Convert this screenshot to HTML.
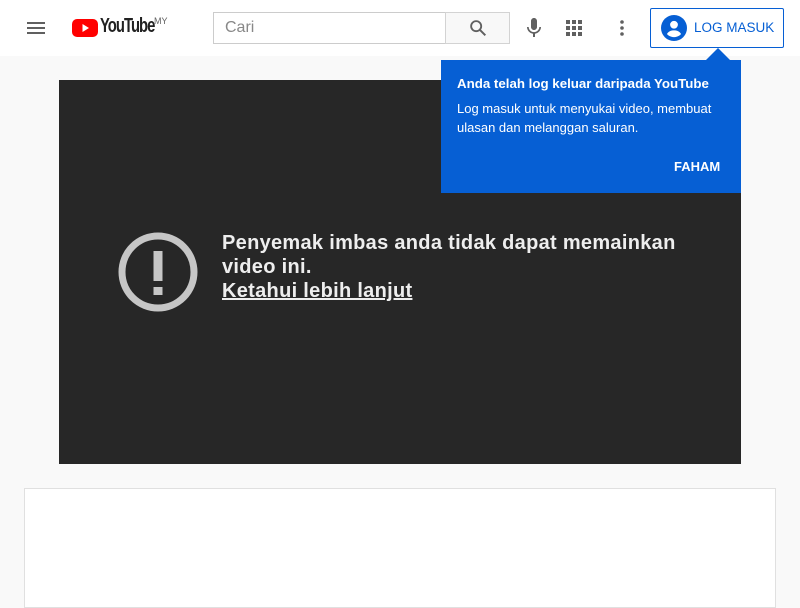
<!DOCTYPE html>
<html><head><meta charset="utf-8"><style>
*{margin:0;padding:0;box-sizing:border-box}
body{width:800px;height:600px;overflow:hidden;background:#f9f9f9;font-family:"Liberation Sans",Roboto,sans-serif;position:relative}
.hdr{position:absolute;left:0;top:0;width:800px;height:56px;background:#fff}
.abs{position:absolute}
</style></head><body>
<div class="hdr">
  <svg class="abs" style="left:24px;top:16px" width="24" height="24" viewBox="0 0 24 24"><path d="M3 6h18v2H3zM3 11h18v2H3zM3 16h18v2H3z" fill="#606060"/></svg>
  <svg class="abs" style="left:72px;top:19px" width="26" height="18" viewBox="0 0 26 18"><rect x="0" y="0" width="26" height="18" rx="5" fill="#f00"/><path d="M10.5 5v8l6.5-4z" fill="#fff"/></svg>
  <div class="abs" style="left:100px;top:15px;font-size:20px;font-weight:bold;letter-spacing:-1.3px;color:#212121;transform:scaleX(0.74);transform-origin:left">YouTube</div>
  <div class="abs" style="left:154px;top:16px;font-size:9px;color:#606060">MY</div>
  <div class="abs" style="left:213px;top:12px;width:233px;height:32px;border:1px solid #ccc;border-right:none;padding:6px 11px;font-size:16px;color:#888">Cari</div>
  <div class="abs" style="left:445px;top:12px;width:65px;height:32px;background:#f8f8f8;border:1px solid #d3d3d3"></div>
  <svg class="abs" style="left:467px;top:17px" width="22" height="22" viewBox="0 0 24 24"><circle cx="10" cy="10" r="5.5" fill="none" stroke="#606060" stroke-width="2"/><path d="M14 14l6 6" stroke="#606060" stroke-width="2.2"/></svg>
  <svg class="abs" style="left:522px;top:16px" width="24" height="24" viewBox="0 0 24 24"><path d="M12 14c1.66 0 3-1.34 3-3V5c0-1.66-1.34-3-3-3S9 3.34 9 5v6c0 1.66 1.34 3 3 3zm5.3-3c0 3-2.54 5.1-5.3 5.1S6.7 14 6.7 11H5c0 3.41 2.72 6.23 6 6.72V21h2v-3.28c3.28-.49 6-3.31 6-6.72h-1.7z" fill="#606060"/></svg>
  <svg class="abs" style="left:562px;top:16px" width="24" height="24" viewBox="0 0 24 24"><path d="M4 4h4v4H4zm6 0h4v4h-4zm6 0h4v4h-4zM4 10h4v4H4zm6 0h4v4h-4zm6 0h4v4h-4zM4 16h4v4H4zm6 0h4v4h-4zm6 0h4v4h-4z" fill="#606060"/></svg>
  <svg class="abs" style="left:610px;top:16px" width="24" height="24" viewBox="0 0 24 24"><circle cx="12" cy="6" r="1.8" fill="#606060"/><circle cx="12" cy="12" r="1.8" fill="#606060"/><circle cx="12" cy="18" r="1.8" fill="#606060"/></svg>
  <div class="abs" style="left:650px;top:8px;width:134px;height:40px;border:1px solid #065fd4;border-radius:2px"></div>
  <svg class="abs" style="left:661px;top:15px" width="26" height="26" viewBox="0 0 24 24"><circle cx="12" cy="12" r="12" fill="#065fd4"/><circle cx="12" cy="9" r="3.6" fill="#fff"/><path d="M5.5 17.5c1.5-2.5 4-3.3 6.5-3.3s5 .8 6.5 3.3c-1.6 1.8-3.9 2.9-6.5 2.9s-4.9-1.1-6.5-2.9z" fill="#fff"/></svg>
  <div class="abs" style="left:694px;top:20px;font-size:13.5px;color:#065fd4">LOG MASUK</div>
</div>
<div class="abs" style="left:59px;top:80px;width:682px;height:384px;background:#272727"></div>
<svg class="abs" style="left:117px;top:231px" width="82" height="82" viewBox="0 0 82 82"><circle cx="41" cy="41" r="36" fill="none" stroke="#c6c6c6" stroke-width="7"/><rect x="36.5" y="20" width="9" height="30" fill="#c6c6c6"/><rect x="36.5" y="56" width="9" height="8" fill="#c6c6c6"/></svg>
<div class="abs" style="left:222px;top:231px;width:480px;font-size:20px;font-weight:bold;color:#eee;line-height:24px;letter-spacing:0.3px">Penyemak imbas anda tidak dapat memainkan video ini.<br><span style="text-decoration:underline">Ketahui lebih lanjut</span></div>
<div class="abs" style="left:441px;top:60px;width:300px;height:133px;background:#065fd4;color:#fff">
  <div class="abs" style="left:16px;top:16px;font-size:13.3px;font-weight:bold">Anda telah log keluar daripada YouTube</div>
  <div class="abs" style="left:16px;top:39px;width:270px;font-size:13px;line-height:19px">Log masuk untuk menyukai video, membuat ulasan dan melanggan saluran.</div>
  <div class="abs" style="left:233px;top:99px;font-size:13px;font-weight:bold">FAHAM</div>
</div>
<div class="abs" style="left:706px;top:48px;width:0;height:0;border-left:12px solid transparent;border-right:12px solid transparent;border-bottom:12px solid #065fd4"></div>
<div class="abs" style="left:24px;top:488px;width:752px;height:120px;background:#fff;border:1px solid #e0e0e0"></div>
</body></html>
